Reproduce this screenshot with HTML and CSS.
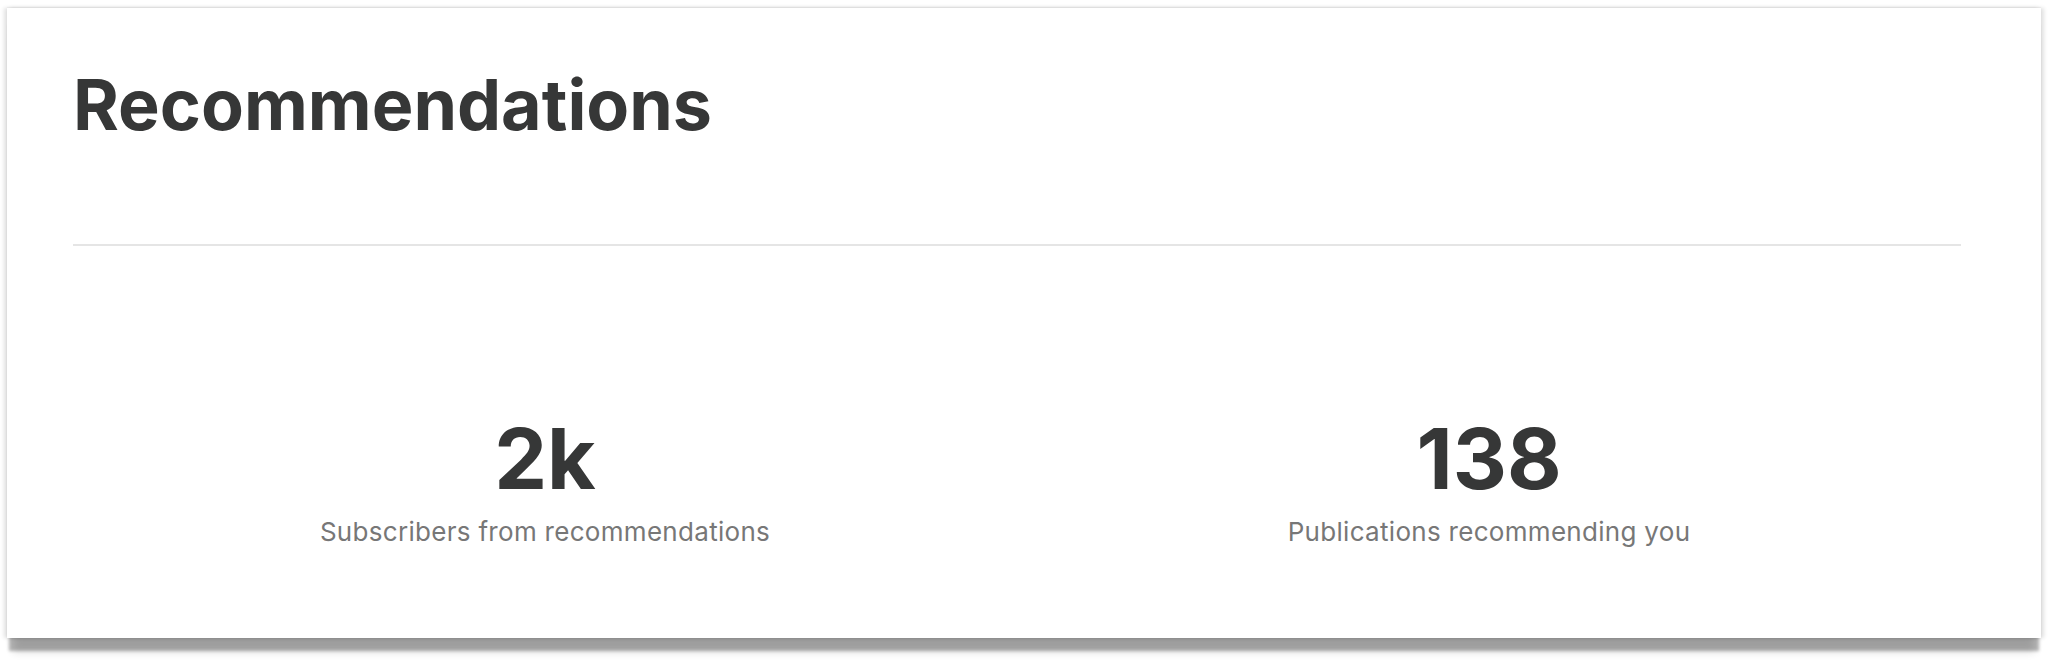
FILE: index.html
```html
<!DOCTYPE html>
<html lang="en">
<head>
  <meta charset="UTF-8" />
  <title>Recommendations</title>
  <link rel="stylesheet" href="styles.css">
</head>
<body>

<section class="card">
  <h1 class="card-title">Recommendations</h1>
  <hr class="divider" />

  <div class="stats">
    <div class="stat">
      <div class="stat-value">2k</div>
      <div class="stat-label">Subscribers from recommendations</div>
    </div>
    <div class="stat">
      <div class="stat-value">138</div>
      <div class="stat-label">Publications recommending you</div>
    </div>
  </div>
</section>

</body>
</html>
```

FILE: styles.css
```css
* { box-sizing: border-box; margin: 0; padding: 0; }

body {
  font-family: 'Inter', 'Liberation Sans', sans-serif;
  background: #fff;
  color: #363737;
  padding-bottom: 30px;
}

.card {
  margin: 8px 7px 0;
  height: 630px;
  padding: 62px 80px 0 66px;
  background: #fff;
  box-shadow:
    0 15px 3px -2px rgba(0, 0, 0, 0.28),
    0 20px 8px -6px rgba(0, 0, 0, 0.14),
    -3px 0 4px rgba(0, 0, 0, 0.12),
    3px 0 4px rgba(0, 0, 0, 0.12),
    0 -1px 1px rgba(0, 0, 0, 0.03);
}

.card-title {
  font-size: 70px;
  line-height: 1;
  font-weight: 700;
}

.divider {
  border: none;
  height: 2px;
  background: #e5e5e5;
  margin-top: 104px;
}

.stats {
  display: grid;
  grid-template-columns: 1fr 1fr;
  margin-top: 171px;
  text-align: center;
}

.stat-value {
  font-size: 84px;
  line-height: 1;
  font-weight: 700;
}

.stat-label {
  margin-top: 18px;
  font-size: 26px;
  line-height: 1;
  letter-spacing: 0.3px;
  color: #777;
}
```
